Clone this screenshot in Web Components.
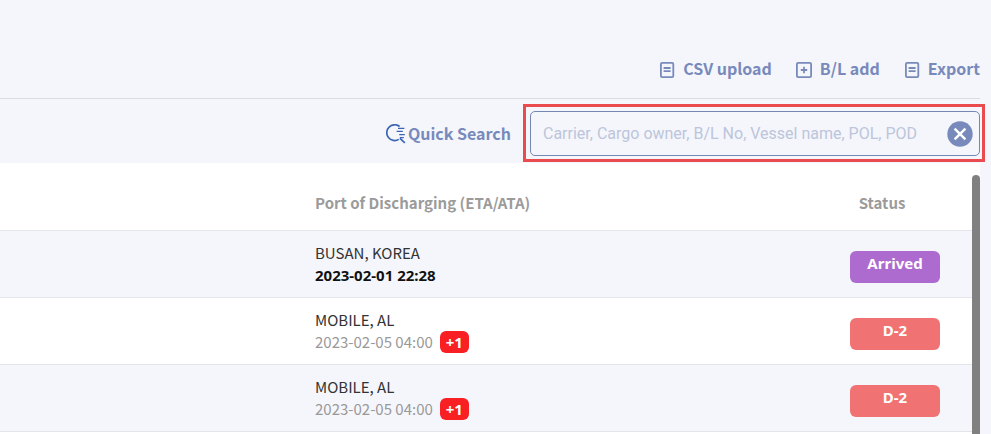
<!DOCTYPE html>
<html lang="en">
<head>
<meta charset="UTF-8">
<meta name="viewport" content="width=device-width, initial-scale=1.0">
<title>Cargo Tracking</title>
<style>
  :root {
    --page-bg: #f5f6fb;
    --accent: #788abb;
    --line: #d9dce2;
    --row-line: #e4e5e8;
    --font-main: "Noto Sans CJK KR", sans-serif;
    --font-bold: "Noto Sans", sans-serif;
  }
  body {
    margin: 0;
    background: var(--page-bg);
    font-family: var(--font-main);
  }
</style>
</head>
<body>
<tracking-page></tracking-page>

<script>
const ICONS = {
  doc: '<rect x="1.9" y="0.9" width="12.4" height="14.2" rx="1.2"/><path d="M4.6 6h7M4.6 9.2h7"/>',
  plus: '<rect x="0.9" y="0.9" width="14.2" height="14.2" rx="1.2"/><path d="M8 4.8v6.4M4.8 8h6.4"/>'
};

class ActionButton extends HTMLElement {
  constructor() {
    super();
    this.attachShadow({ mode: 'open' });
    this.shadowRoot.innerHTML = `
      <style>
        :host {
          display: block;
        }
        button {
          display: flex;
          align-items: center;
          gap: 8px;
          padding: 0;
          border: none;
          background: none;
          color: var(--accent);
          font-family: inherit;
          font-size: 16px;
          font-weight: 700;
          line-height: 28px;
          cursor: pointer;
        }
        svg {
          width: 16px;
          height: 16px;
          margin-top: 4px;
          fill: none;
          stroke: currentColor;
          stroke-width: 1.8;
        }
      </style>
      <button type="button">
        <svg viewBox="0 0 16 16" aria-hidden="true">${ICONS[this.getAttribute('icon')]}</svg>
        <slot></slot>
      </button>
    `;
  }
}

customElements.define('action-button', ActionButton);

class QuickSearch extends HTMLElement {
  constructor() {
    super();
    this.attachShadow({ mode: 'open' });
    this.shadowRoot.innerHTML = `
      <style>
        :host {
          display: block;
        }
        button {
          display: flex;
          align-items: center;
          gap: 2px;
          padding: 0 0 2px;
          border: none;
          background: none;
          color: var(--accent);
          font-family: inherit;
          font-size: 16px;
          font-weight: 700;
          line-height: 28px;
          cursor: pointer;
        }
        svg {
          width: 20px;
          height: 20px;
          margin-top: 2px;
          fill: none;
          stroke: #3c66b4;
        }
      </style>
      <button type="button">
        <svg viewBox="0 0 20 20" aria-hidden="true">
          <path stroke-width="1.7" d="M13.6 2.5A7.9 7.9 0 1 0 12.8 15.4M14 14.4l4.8 4.4"/>
          <path stroke-width="1.3" d="M12 4.3h6.4M10.6 7.3h6.2M13.2 10.7h5.6M13.8 13.7h4"/>
        </svg>
        <slot></slot>
      </button>
    `;
  }
}

customElements.define('quick-search', QuickSearch);

class SearchBox extends HTMLElement {
  constructor() {
    super();
    this.attachShadow({ mode: 'open' });
    this.shadowRoot.innerHTML = `
      <style>
        :host {
          display: block;
          position: relative;
        }
        .field {
          display: flex;
          align-items: center;
          box-sizing: border-box;
          height: 45px;
          padding: 0 6px 0 12px;
          border: 1px solid #7488b4;
          border-radius: 5px;
        }
        input {
          flex: 1;
          min-width: 0;
          padding: 0;
          border: none;
          outline: none;
          background: none;
          color: #333;
          font-family: Roboto, sans-serif;
          font-size: 16px;
        }
        input::placeholder {
          color: #bcc5dc;
          opacity: 1;
        }
        button {
          display: flex;
          padding: 0;
          border: none;
          background: none;
          cursor: pointer;
        }
        svg {
          width: 26px;
          height: 26px;
        }
        .highlight {
          position: absolute;
          inset: -7px -5px -6px -7px;
          border: 3px solid #e94b4e;
          pointer-events: none;
        }
      </style>
      <div class="field">
        <input type="text" aria-label="Search" placeholder="Carrier, Cargo owner, B/L No, Vessel name, POL, POD">
        <button type="button" aria-label="Clear">
          <svg viewBox="0 0 26 26" aria-hidden="true">
            <circle cx="13" cy="13" r="12.7" fill="#788abb"/>
            <path d="M7.6 7.6l10.8 10.8M18.4 7.6L7.6 18.4" stroke="#fff" stroke-width="2.4"/>
          </svg>
        </button>
      </div>
      <div class="highlight"></div>
    `;
  }

  connectedCallback() {
    const input = this.shadowRoot.querySelector('input');
    this.shadowRoot.querySelector('button').addEventListener('click', () => {
      input.value = '';
      input.focus();
    });
  }
}

customElements.define('search-box', SearchBox);

class StatusBadge extends HTMLElement {
  constructor() {
    super();
    this.attachShadow({ mode: 'open' });
    this.shadowRoot.innerHTML = `
      <style>
        :host {
          display: block;
          box-sizing: border-box;
          width: 90px;
          height: 32px;
          margin: 5px auto 0;
          border-radius: 6px;
          background: #f17272;
          color: white;
          font-family: var(--font-bold);
          font-size: 15px;
          font-weight: 700;
          line-height: 25px;
          text-align: center;
        }
        :host([type="arrived"]) {
          background: #ad6bd0;
        }
      </style>
      <slot></slot>
    `;
  }
}

customElements.define('status-badge', StatusBadge);

class DelayBadge extends HTMLElement {
  constructor() {
    super();
    this.attachShadow({ mode: 'open' });
    this.shadowRoot.innerHTML = `
      <style>
        :host {
          display: block;
          width: 29px;
          border-radius: 6px;
          background: #f92024;
          color: white;
          font-family: var(--font-bold);
          font-size: 15px;
          font-weight: 700;
          line-height: 22px;
          text-align: center;
        }
      </style>
      <slot></slot>
    `;
  }
}

customElements.define('delay-badge', DelayBadge);

class CargoTable extends HTMLElement {
  constructor() {
    super();
    this.attachShadow({ mode: 'open' });

    this.rows = [
      { port: 'BUSAN, KOREA', date: '2023-02-01 22:28', actual: true, status: 'Arrived' },
      { port: 'MOBILE, AL', date: '2023-02-05 04:00', delay: '+1', status: 'D-2' },
      { port: 'MOBILE, AL', date: '2023-02-05 04:00', delay: '+1', status: 'D-2' }
    ];

    this.shadowRoot.innerHTML = `
      <style>
        :host {
          display: flex;
          align-items: stretch;
          overflow: hidden;
          background: white;
        }
        table {
          flex: 1;
          align-self: flex-start;
          table-layout: fixed;
          border-collapse: separate;
          border-spacing: 0;
        }
        .port-col {
          width: 503px;
        }
        .status-col {
          width: 154px;
        }
        th, td {
          box-sizing: border-box;
          padding: 0;
          border-bottom: 1px solid var(--row-line);
        }
        th {
          height: 68px;
          padding-top: 12px;
          color: #9b9b9b;
          font-size: 15px;
          font-weight: 700;
          line-height: 24px;
          text-align: left;
        }
        th.status {
          padding-right: 26px;
          text-align: center;
        }
        td {
          height: 67px;
          font-size: 15px;
          line-height: 22px;
        }
        tbody tr:nth-child(odd) {
          background: var(--page-bg);
        }
        .port {
          color: #333;
        }
        .date {
          display: flex;
          gap: 7px;
          color: #999;
        }
        .date.actual {
          color: #111;
          font-family: var(--font-bold);
          font-weight: 700;
        }
        .scroll {
          flex: none;
          width: 8px;
          margin-top: 12px;
          border-radius: 4px 4px 0 0;
          background: #808080;
        }
      </style>
      <table>
        <colgroup>
          <col>
          <col class="port-col">
          <col class="status-col">
        </colgroup>
        <thead>
          <tr>
            <th></th>
            <th scope="col">Port of Discharging (ETA/ATA)</th>
            <th scope="col" class="status">Status</th>
          </tr>
        </thead>
        <tbody>
          ${this.rows.map(row => this.renderRow(row)).join('')}
        </tbody>
      </table>
      <div class="scroll"></div>
    `;
  }

  renderRow(row) {
    return `
      <tr>
        <td></td>
        <td>
          <div class="port">${row.port}</div>
          <div class="date ${row.actual ? 'actual' : ''}">
            <span>${row.date}</span>
            ${row.delay ? `<delay-badge>${row.delay}</delay-badge>` : ''}
          </div>
        </td>
        <td><status-badge type="${row.status.toLowerCase()}">${row.status}</status-badge></td>
      </tr>
    `;
  }
}

customElements.define('cargo-table', CargoTable);

class TrackingPage extends HTMLElement {
  constructor() {
    super();
    this.attachShadow({ mode: 'open' });
    this.shadowRoot.innerHTML = `
      <style>
        :host {
          display: flex;
          flex-direction: column;
          box-sizing: border-box;
          height: 100vh;
          padding-right: 11px;
        }
        .actions {
          display: flex;
          justify-content: flex-end;
          gap: 24px;
          padding: 54px 0 16px;
          border-bottom: 1px solid var(--line);
        }
        .search {
          display: flex;
          align-items: center;
          justify-content: flex-end;
          gap: 19px;
          padding: 12px 0 7px;
        }
        search-box {
          flex: 0 1 450px;
        }
        cargo-table {
          flex: 1;
          min-height: 0;
        }
      </style>
      <div class="actions">
        <action-button icon="doc">CSV upload</action-button>
        <action-button icon="plus">B/L add</action-button>
        <action-button icon="doc">Export</action-button>
      </div>
      <div class="search">
        <quick-search>Quick Search</quick-search>
        <search-box></search-box>
      </div>
      <cargo-table></cargo-table>
    `;
  }
}

customElements.define('tracking-page', TrackingPage);
</script>
</body>
</html>
